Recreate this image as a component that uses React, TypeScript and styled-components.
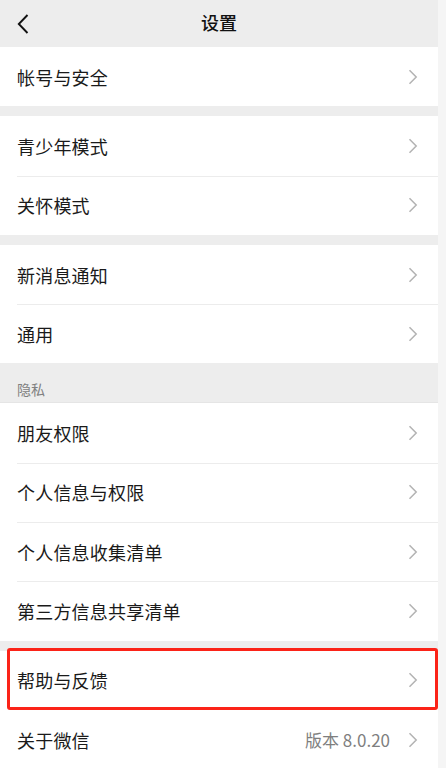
import React from 'react'
import styled, { createGlobalStyle } from 'styled-components'

const GlobalStyle = createGlobalStyle`
  html, body {
    margin: 0;
    padding: 0;
    background: #f5f5f5;
  }
  body {
    font-family: "Noto Sans CJK SC", "Noto Sans", sans-serif;
    -webkit-font-smoothing: antialiased;
  }
`

interface RowItem {
  label: string
  extra?: string
  highlighted?: boolean
}

interface Group {
  header?: string
  rows: RowItem[]
}

const groups: Group[] = [
  { rows: [{ label: '帐号与安全' }] },
  { rows: [{ label: '青少年模式' }, { label: '关怀模式' }] },
  { rows: [{ label: '新消息通知' }, { label: '通用' }] },
  {
    header: '隐私',
    rows: [
      { label: '朋友权限' },
      { label: '个人信息与权限' },
      { label: '个人信息收集清单' },
      { label: '第三方信息共享清单' },
    ],
  },
  {
    rows: [
      { label: '帮助与反馈', highlighted: true },
      { label: '关于微信', extra: '版本 8.0.20' },
    ],
  },
]

const Page = styled.div`
  width: 438px;
  height: 768px;
  overflow: hidden;
  background: #ededed;
`

const NavBar = styled.div`
  height: 47px;
  display: grid;
  grid-template-columns: 60px 1fr 60px;
  align-items: center;
  background: #ededed;
`

const BackButton = styled.div`
  display: flex;
  align-items: center;
  padding-left: 17px;
  height: 100%;
`

const Title = styled.div`
  text-align: center;
  font-size: 18px;
  font-weight: 500;
  color: #111;
  padding-bottom: 4px;
`

const Section = styled.div<{ $first?: boolean }>`
  margin-top: ${(p) => (p.$first ? '0' : '10px')};
`

const SectionHeader = styled.div`
  height: 40px;
  margin-top: -10px;
  padding: 0 17px;
  display: flex;
  align-items: center;
  padding-top: 13px;
  box-sizing: border-box;
  font-size: 14px;
  color: #808080;
  border-bottom: 1px solid #e5e5e5;
`

const List = styled.div`
  background: #fff;
`

const Row = styled.div<{ $divider?: boolean; $highlighted?: boolean }>`
  position: relative;
  height: 59.3px;
  display: flex;
  align-items: center;
  padding: 0 20px 0 17px;
  box-sizing: border-box;

  ${(p) =>
    p.$divider &&
    `
    &::after {
      content: '';
      position: absolute;
      top: 0;
      left: 17px;
      right: 0;
      height: 1px;
      background: #ececec;
    }
  `}

  ${(p) =>
    p.$highlighted &&
    `
    &::before {
      content: '';
      position: absolute;
      top: -3px;
      left: 7px;
      right: 0;
      bottom: 0;
      border: 3px solid #fb2318;
      border-radius: 3px;
      pointer-events: none;
    }
  `}
`

const Label = styled.span`
  flex: 1;
  font-size: 18px;
  color: #1a1a1a;
  letter-spacing: 0.2px;
`

const Extra = styled.span`
  font-size: 17px;
  color: #7f7f7f;
  margin-right: 18px;
`

const Chevron = () => (
  <svg width="10" height="16" viewBox="0 0 10 16">
    <path d="M1.5 1.2 L8.2 8 L1.5 14.8" fill="none" stroke="#b3b3b3" strokeWidth="1.5" />
  </svg>
)

const BackIcon = () => (
  <svg width="12" height="20" viewBox="0 0 12 20">
    <path d="M10.5 1 L1.8 10 L10.5 19" fill="none" stroke="#111" strokeWidth="1.9" />
  </svg>
)

const App = () => {
  return (
    <>
      <GlobalStyle />
      <Page>
        <NavBar>
          <BackButton>
            <BackIcon />
          </BackButton>
          <Title>设置</Title>
          <div />
        </NavBar>
        {groups.map((group, gi) => (
          <Section key={gi} $first={gi === 0}>
            {group.header && <SectionHeader>{group.header}</SectionHeader>}
            <List>
              {group.rows.map((row, ri) => (
                <Row key={row.label} $divider={ri > 0 && !row.highlighted && !group.rows[ri - 1].highlighted} $highlighted={row.highlighted}>
                  <Label>{row.label}</Label>
                  {row.extra && <Extra>{row.extra}</Extra>}
                  <Chevron />
                </Row>
              ))}
            </List>
          </Section>
        ))}
      </Page>
    </>
  )
}

export default App
